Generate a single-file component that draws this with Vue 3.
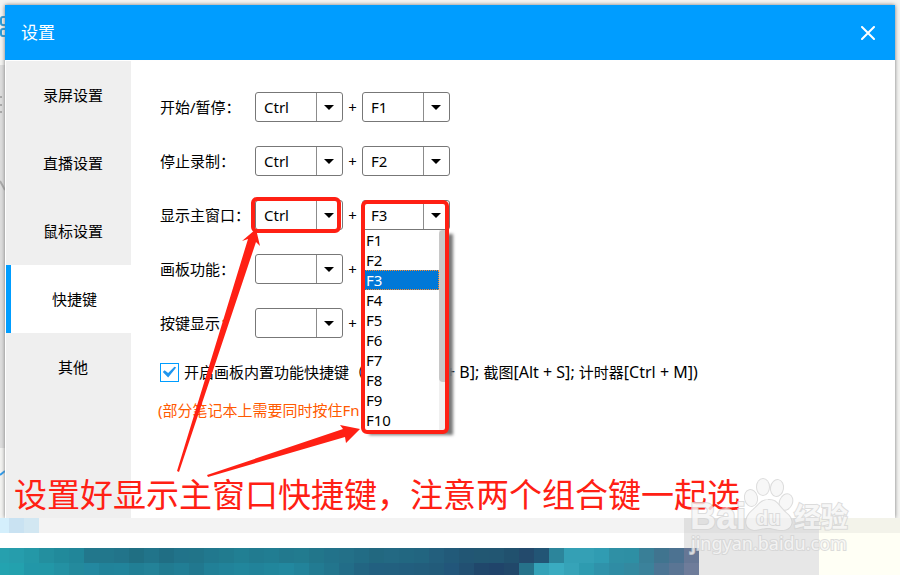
<script setup>
import { ref } from 'vue'

const tabs = ['录屏设置', '直播设置', '鼠标设置', '快捷键', '其他']
const activeTab = ref('快捷键')

const keys = ['F1', 'F2', 'F3', 'F4', 'F5', 'F6', 'F7', 'F8', 'F9', 'F10']
const modifiers = ['', 'Ctrl', 'Alt', 'Shift']

const shortcuts = ref([
  { id: 'start', label: '开始/暂停：', modifier: 'Ctrl', key: 'F1' },
  { id: 'stop', label: '停止录制：', modifier: 'Ctrl', key: 'F2' },
  { id: 'show', label: '显示主窗口：', modifier: 'Ctrl', key: 'F3', open: true },
  { id: 'board', label: '画板功能：', modifier: '', key: '' },
  { id: 'keys', label: '按键显示：', modifier: '', key: '' },
])
const boardKeys = ref(true)

function pick(row, key) {
  row.key = key
  row.open = false
}

// wallpaper strip below the window
const mosaic = [
  ['#26a0ae', '#269dac', '#2498a7', '#238f9f', '#218a9b', '#218699', '#22778c', '#22778c', '#22748a', '#206f83', '#21748a', '#206e84', '#21738a', '#217489', '#21788e', '#217b8f', '#217f93', '#217b90', '#217d92', '#22798e', '#227b8f', '#22768b', '#22728a', '#237088', '#226c85', '#226880', '#236983', '#226781', '#226580', '#235f7d', '#225a79', '#225674', '#225772', '#225672', '#21516e', '#234a6c', '#225575', '#2c859b', '#34a0b5', '#34a0b5', '#309cb2', '#2f90a5', '#2e8fa4', '#397f97', '#40748f', '#4c7291', '#667795'],
  ['#23a3b0', '#23a1ae', '#2297a8', '#2297a7', '#2391a3', '#238a9d', '#2388a0', '#21839a', '#21849b', '#217f95', '#238298', '#217b91', '#217e95', '#21788f', '#218097', '#21839a', '#21869c', '#21839a', '#21869c', '#22889f', '#22839a', '#227b92', '#22758d', '#226d88', '#226582', '#226080', '#22607f', '#225e7e', '#225d7c', '#225b7a', '#22567a', '#225072', '#20476b', '#20446a', '#21486a', '#26728a', '#34a2b8', '#3aabc0', '#36a3b8', '#2e9bb0', '#2f92aa', '#2f8ca4', '#3389a0', '#3b829b', '#4c7594', '#5a7594', '#6e7c9a'],
]
</script>

<template>
  <div class="desktop">
    <svg class="behind" width="5" height="518" aria-hidden="true">
      <rect y="65" width="5" height="383" fill="#dedede" />
      <path d="M5 17H3Q1 17 1 19V23Q1 25 3 25H5M5 29H3Q1 29 1 31V34Q1 36 3 36H5" fill="none" stroke="#2a9bd8" stroke-width="2" />
      <path d="M0 97H2M0 105H2M0 112H2M0 181L5 190" stroke="#aaa" stroke-width="2" />
      <path d="M0 475L5 471" stroke="#2a9bf0" stroke-width="2" />
    </svg>

    <main class="window">
      <header class="titlebar">
        <h1>设置</h1>
        <button class="close" aria-label="关闭">
          <svg width="14" height="14" viewBox="0 0 14 14">
            <path d="M1 1L13 13M13 1L1 13" stroke="#fff" stroke-width="2" stroke-linecap="round" />
          </svg>
        </button>
      </header>

      <div class="body">
        <nav class="sidebar">
          <button
            v-for="tab in tabs"
            :key="tab"
            class="tab"
            :class="{ active: tab === activeTab }"
            @click="activeTab = tab"
          >{{ tab }}</button>
        </nav>

        <section class="panel">
          <div v-for="row in shortcuts" :key="row.id" class="row">
            <label :for="row.id">{{ row.label }}</label>
            <span class="combo">
              <select :id="row.id" v-model="row.modifier">
                <option v-for="m in modifiers" :key="m" :value="m">{{ m }}</option>
              </select>
              <svg class="arrow" width="26" height="28" viewBox="0 0 26 28">
                <path d="M0.5 0V28" stroke="#8c8c8c" />
                <path d="M8 12H18L13 17Z" />
              </svg>
            </span>
            <span class="plus">+</span>
            <span class="combo">
              <select v-model="row.key" :aria-label="row.label">
                <option value=""></option>
                <option v-for="k in keys" :key="k" :value="k">{{ k }}</option>
              </select>
              <svg class="arrow" width="26" height="28" viewBox="0 0 26 28">
                <path d="M0.5 0V28" stroke="#8c8c8c" />
                <path d="M8 12H18L13 17Z" />
              </svg>
              <div v-if="row.open" class="dropdown">
                <ul role="listbox">
                  <li
                    v-for="k in keys"
                    :key="k"
                    role="option"
                    :aria-selected="k === row.key"
                    :class="{ selected: k === row.key }"
                    @click="pick(row, k)"
                  >{{ k }}</li>
                </ul>
                <div class="scrollbar"><div class="thumb"></div></div>
              </div>
            </span>
          </div>

          <label class="check">
            <input v-model="boardKeys" type="checkbox" />
            <svg class="tick" width="19" height="19" viewBox="0 0 19 19">
              <path v-if="boardKeys" d="M2 9L4 7L8 10L15 3L17 4L8 15Z" fill="#2196ee" />
            </svg>
            <span>开启画板内置功能快捷键（</span>
            <span class="combos"><kbd>+ B]; </kbd>截图<kbd>[Alt + S]; </kbd>计时器<kbd>[Ctrl + M])</kbd></span>
          </label>
          <p class="hint">(部分笔记本上需要同时按住Fn</p>
        </section>
      </div>
    </main>

    <footer class="wallpaper">
      <div class="left">
        <div class="taskbar"><i></i><i></i><i></i></div>
        <div v-for="(line, y) in mosaic" :key="y" class="line">
          <i v-for="(color, x) in line" :key="x" :style="{ background: color }"></i>
        </div>
      </div>
      <div class="plate"></div>
      <div class="cream"></div>
    </footer>

    <svg class="notes" width="900" height="575" viewBox="0 0 900 575" aria-hidden="true">
      <g fill="none" stroke="#ff2014" stroke-width="4">
        <rect x="253" y="199" width="86" height="32" rx="4" />
        <rect x="363" y="202" width="84" height="230" rx="4" />
      </g>
      <g fill="#ff2014">
        <path d="M256 229L242 241L248 239L177 471L179 472L256 242L260 246Z" />
        <path d="M360 429L340 425L343 429L207 475L208 477L345 437L346 443Z" />
      </g>
    </svg>
    <p class="caption">设置好显示主窗口快捷键，注意两个组合键一起选</p>

    <svg class="watermark" width="180" height="90" viewBox="0 0 180 90">
      <g fill="#f6f6f6" stroke="#d4d4d4" stroke-width="2" paint-order="stroke">
        <text class="logo" x="10" y="59">Bai</text>
        <ellipse cx="71" cy="28" rx="6" ry="8" transform="rotate(-12 71 28)" />
        <ellipse cx="83" cy="17" rx="6" ry="8" />
        <ellipse cx="97" cy="18" rx="6" ry="8" transform="rotate(10 97 18)" />
        <ellipse cx="106" cy="32" rx="6" ry="8" transform="rotate(22 106 32)" />
        <path d="M88 30C97 29 98 36 106 43C116 51 111 60 102 60C96 60 93 58 88 58C82 58 79 60 74 60C64 59 64 48 72 41C79 35 81 30 88 30Z" />
        <text class="du" x="76" y="55">du</text>
        <text class="cn" x="114" y="57">经验</text>
        <text class="url" x="11" y="80">jingyan.baidu.com</text>
      </g>
    </svg>
  </div>
</template>

<style>
body {
  margin: 0;
}
</style>

<style scoped>
.desktop {
  position: relative;
  display: flex;
  flex-direction: column;
  min-height: 100vh;
  overflow: hidden;
  background: #f4f4f2;
  font: 15px/20px "Noto Sans", "Noto Sans CJK SC", sans-serif;
  color: #000;
}

.behind {
  position: absolute;
  left: 0;
  top: 0;
}

.window {
  position: relative;
  flex: 1;
  display: flex;
  flex-direction: column;
  margin: 5px 5px 0;
  background: #fff;
  box-shadow: 0 0 4px #777;
}

.titlebar {
  display: flex;
  align-items: center;
  justify-content: space-between;
  height: 55px;
  padding: 0 14px 0 16px;
  background: #009dff;
  color: #fff;
}

h1 {
  margin: 0;
  font-size: 17px;
  font-weight: 400;
}

button {
  border: 0;
  padding: 0;
  background: none;
  font: inherit;
  color: inherit;
}

.close {
  display: flex;
  padding: 6px;
}

.body {
  flex: 1;
  display: flex;
  padding: 1px 0 0 1px;
}

.sidebar {
  display: flex;
  flex-direction: column;
  width: 125px;
  background: #efefef;
}

.tab {
  height: 68px;
  padding-left: 9px;
}

.tab.active {
  padding-left: 7px;
  border-left: 5px solid #009dff;
  background: #fff;
}

.panel {
  flex: 1;
  padding: 31px 0 0 29px;
}

.row {
  display: flex;
  align-items: center;
  height: 30px;
  margin-bottom: 24px;
}

.row label {
  width: 95px;
  white-space: nowrap;
}

.combo {
  position: relative;
  width: 88px;
  height: 30px;
}

select {
  appearance: none;
  box-sizing: border-box;
  width: 100%;
  height: 100%;
  padding: 0 28px 0 8px;
  border: 1px solid #777;
  border-radius: 3px;
  background: #fff;
  font: inherit;
  color: #000;
}

.arrow {
  position: absolute;
  right: 1px;
  top: 1px;
  pointer-events: none;
}

.plus {
  width: 19px;
  text-align: center;
}

.dropdown {
  position: absolute;
  z-index: 1;
  left: 2px;
  top: 29px;
  display: flex;
  width: 84px;
  border-top: 1px solid #777;
  background: #fff;
  box-shadow: 5px 5px 3px #777;
}

.dropdown ul {
  flex: 1;
  margin: 0;
  padding: 0;
  list-style: none;
}

.dropdown li {
  box-sizing: border-box;
  height: 20px;
  padding-left: 2px;
}

.dropdown li.selected {
  outline: 1px dotted #ff8a28;
  outline-offset: -1px;
  background: #0078d7;
  color: #fff;
}

.scrollbar {
  width: 9px;
  background: #f0f0f0;
}

.thumb {
  height: 76%;
  border-radius: 4px;
  background: #c8c8c8;
}

.check {
  display: flex;
  align-items: center;
  height: 20px;
  white-space: nowrap;
}

.check input {
  position: absolute;
  opacity: 0;
}

.tick {
  box-sizing: border-box;
  margin-right: 5px;
  border: 1px solid #009dff;
}

/* the open list covers this stretch of the line */
.combos {
  margin-left: 82px;
}

kbd {
  font-family: inherit;
  font-size: 16px;
}

.hint {
  margin: 18px 0 0 -2px;
  color: #ff5a00;
}

.wallpaper {
  position: relative;
  display: flex;
  height: 57px;
}

.left {
  flex: 1;
  background: linear-gradient(to left, #e7e7e7 15px, #fff 15px);
}

.taskbar {
  display: flex;
  height: 15px;
  margin-bottom: 15px;
  background: linear-gradient(to left, #e0e0e0 15px, #f3f3f3 15px);
}

.taskbar i {
  width: 15px;
  background: #c9e2f2;
}

.taskbar i:first-child {
  width: 9px;
  background: #d4effc;
}

.taskbar i:last-child {
  background: #d2e7f2;
}

.line {
  display: flex;
  height: 15px;
}

.line i {
  flex: 15;
}

.line i:first-child {
  flex: 9;
}

.plate {
  width: 120px;
  background: linear-gradient(#e0e0e0 15px, #e7e7e7 15px);
}

.cream {
  width: 81px;
  background: linear-gradient(#f3f3ea 15px, #fffff5 15px);
}

.notes {
  position: absolute;
  z-index: 2;
  left: 0;
  top: 0;
  pointer-events: none;
}

.caption {
  position: absolute;
  left: 14px;
  top: 475px;
  margin: 0;
  font-size: 33px;
  line-height: 40px;
  white-space: nowrap;
  color: #ff2014;
}

.watermark {
  position: absolute;
  left: 680px;
  top: 470px;
  opacity: 0.8;
}

.logo {
  font: bold 36px "Liberation Sans", sans-serif;
}

.du {
  font: bold 20px "Liberation Sans", sans-serif;
}

.cn {
  font: bold 27px "Noto Sans CJK SC", sans-serif;
}

.url {
  font: 18px "Noto Sans", sans-serif;
}
</style>
